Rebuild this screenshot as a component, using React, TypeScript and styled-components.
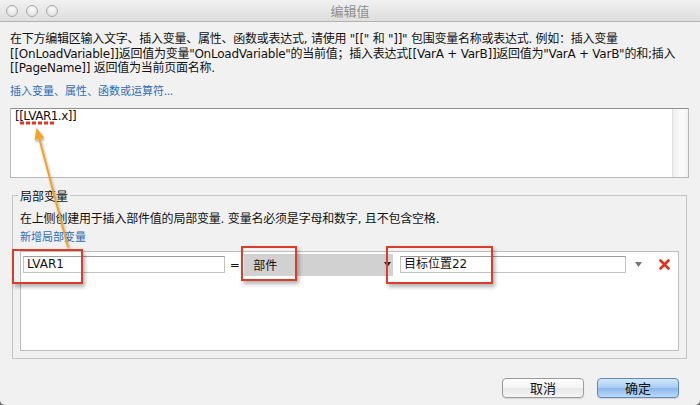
import React from "react";
import styled, { createGlobalStyle } from "styled-components";

const FONT = `"Lucida Grande", "DejaVu Sans", "Noto Sans CJK SC", sans-serif`;
const CJK = `"Noto Sans CJK SC", "DejaVu Sans", sans-serif`;

const GlobalStyle = createGlobalStyle`
  html, body { margin: 0; padding: 0; background: #6f6f6f; }
  body { width: 700px; height: 405px; overflow: hidden; }
  #root { width: 700px; height: 405px; }
`;

const Window = styled.div`
  position: relative;
  width: 700px;
  height: 405px;
  display: flex;
  flex-direction: column;
  background: #f1f1f1;
  border-radius: 0 0 5px 5px;
  overflow: hidden;
  font-family: ${FONT};
  color: #111;
`;

const TitleBar = styled.div`
  flex: none;
  height: 21px;
  display: grid;
  grid-template-columns: 1fr auto 1fr;
  align-items: center;
  background: linear-gradient(#f1f1f1, #dedede);
  border-bottom: 1px solid #b3b3b3;
`;

const Lights = styled.div`
  display: flex;
  gap: 8px;
  padding-left: 6px;
`;

const Light = styled.span`
  width: 12px;
  height: 12px;
  box-sizing: border-box;
  border-radius: 50%;
  border: 1px solid #a8a8a8;
  background: radial-gradient(circle at 50% 35%, #fbfbfb, #dadada);
`;

const Title = styled.div`
  font-family: ${CJK};
  font-size: 13px;
  color: #909090;
`;

const Body = styled.div`
  flex: 1;
  display: flex;
  flex-direction: column;
  padding: 0 11px 0 10px;
`;

const Intro = styled.div`
  margin-top: 10px;
  font-size: 12px;
  line-height: 14.5px;
  letter-spacing: -0.25px;
  white-space: nowrap;
`;

const Link = styled.div<{ $top: number; $lh: number }>`
  align-self: flex-start;
  margin-top: ${(p) => p.$top}px;
  font-family: ${CJK};
  font-size: 11px;
  line-height: ${(p) => p.$lh}px;
  color: #2f6db5;
`;

const Editor = styled.div`
  margin-top: 11px;
  height: 70px;
  box-sizing: border-box;
  display: flex;
  background: #fff;
  border: 1px solid #b8b8b8;
  border-top-color: #8f8f8f;
`;

const EditorText = styled.div`
  flex: 1;
  padding: 0 4px;
  font-size: 12px;
  line-height: 14px;
  letter-spacing: -0.5px;
`;

const Scrollbar = styled.div`
  width: 15px;
  border-left: 1px solid #e2e2e2;
  background: linear-gradient(to right, #efefef, #fcfcfc 60%, #f1f1f1);
`;

const Group = styled.fieldset`
  margin: 11px 2px 0;
  padding: 8px 7px 7px 7px;
  border: 1px solid #c4c4c4;
  min-width: 0;
`;

const Legend = styled.legend`
  padding: 0 2px;
  margin-left: -2px;
  font-family: ${CJK};
  font-size: 12px;
  line-height: 14px;
`;

const GroupText = styled.div`
  font-size: 12px;
  line-height: 16px;
  letter-spacing: -0.2px;
  white-space: nowrap;
`;

const VarList = styled.div`
  margin-top: 7px;
  height: 100px;
  box-sizing: border-box;
  background: #fff;
  border: 1px solid #bcbcbc;
  padding: 2px 0 0 1px;
`;

const VarRow = styled.div`
  display: flex;
  align-items: center;
  height: 22px;
`;

const TextField = styled.div<{ $w: number; $ml: number }>`
  width: ${(p) => p.$w}px;
  margin-left: ${(p) => p.$ml}px;
  height: 17px;
  box-sizing: border-box;
  border: 1px solid #c2c2c2;
  border-top-color: #9d9d9d;
  padding: 0 3px;
  font-size: 12px;
  line-height: 15px;
  background: #fff;
`;

const Equals = styled.span`
  width: 19px;
  text-align: center;
  font-size: 12px;
`;

const Select = styled.div`
  width: 149px;
  height: 22px;
  box-sizing: border-box;
  display: flex;
  align-items: center;
  justify-content: space-between;
  padding: 0 2px 0 9px;
  background: #d1d1d1;
  font-family: ${CJK};
  font-size: 12px;
`;

const IconCell = styled.span<{ $w: number }>`
  width: ${(p) => p.$w}px;
  display: flex;
  align-items: center;
  justify-content: center;
`;

const Footer = styled.div`
  margin-top: 19px;
  display: flex;
  justify-content: flex-end;
  gap: 13px;
  padding-right: 10px;
`;

const Button = styled.button<{ $primary?: boolean }>`
  width: 82px;
  height: 20px;
  box-sizing: border-box;
  padding: 0;
  border-radius: 4px;
  border: 1px solid ${(p) => (p.$primary ? "#5b89c2" : "#9b9b9b")};
  background: ${(p) =>
    p.$primary
      ? "linear-gradient(#d5e7fb, #a8cbf2 50%, #8bb8ec 52%, #bcdafb)"
      : "linear-gradient(#ffffff, #f3f3f3 50%, #e7e7e7 52%, #f5f5f5)"};
  box-shadow: 0 1px 1px rgba(0, 0, 0, 0.12);
  font-family: ${CJK};
  font-size: 13px;
  line-height: 18px;
  color: #111;
`;

const Overlay = styled.svg`
  position: absolute;
  left: 0;
  top: 0;
  width: 700px;
  height: 405px;
  pointer-events: none;
`;

const Callout = styled.div<{ $x: number; $y: number; $w: number; $h: number }>`
  position: absolute;
  left: ${(p) => p.$x}px;
  top: ${(p) => p.$y}px;
  width: ${(p) => p.$w}px;
  height: ${(p) => p.$h}px;
  box-sizing: border-box;
  border: 2px solid #db3e28;
  box-shadow: 2px 3px 4px rgba(0, 0, 0, 0.3);
  pointer-events: none;
`;

const Caret = ({ color }: { color: string }) => (
  <svg width="7" height="5" viewBox="0 0 7 5">
    <path d="M0 0 L7 0 L3.5 5 Z" fill={color} />
  </svg>
);

export default function App() {
  return (
    <>
      <GlobalStyle />
      <Window>
        <TitleBar>
          <Lights>
            <Light />
            <Light />
            <Light />
          </Lights>
          <Title>编辑值</Title>
          <span />
        </TitleBar>
        <Body>
          <Intro>
            在下方编辑区输入文字、插入变量、属性、函数或表达式, 请使用 "[[" 和 "]]" 包围变量名称或表达式. 例如：插入变量
            <br />
            [[OnLoadVariable]]返回值为变量"OnLoadVariable"的当前值；插入表达式[[VarA + VarB]]返回值为"VarA + VarB"的和;插入
            <br />
            [[PageName]] 返回值为当前页面名称.
          </Intro>
          <Link $top={7} $lh={14}>插入变量、属性、函数或运算符...</Link>
          <Editor>
            <EditorText>[[LVAR1.x]]</EditorText>
            <Scrollbar />
          </Editor>
          <Group>
            <Legend>局部变量</Legend>
            <GroupText>在上侧创建用于插入部件值的局部变量. 变量名必须是字母和数字, 且不包含空格.</GroupText>
            <Link $top={1} $lh={16}>新增局部变量</Link>
            <VarList>
              <VarRow>
                <TextField $w={203} $ml={1}>LVAR1</TextField>
                <Equals>=</Equals>
                <Select>
                  <span>部件</span>
                  <Caret color="#222" />
                </Select>
                <TextField $w={227} $ml={7}>目标位置22</TextField>
                <IconCell $w={24}>
                  <Caret color="#777" />
                </IconCell>
                <IconCell $w={28}>
                  <svg width="11" height="11" viewBox="0 0 11 11">
                    <path d="M1.5 1.5 L9.5 9.5 M9.5 1.5 L1.5 9.5" stroke="#e0301f" strokeWidth="2.6" strokeLinecap="round" />
                  </svg>
                </IconCell>
              </VarRow>
            </VarList>
          </Group>
          <Footer>
            <Button>取消</Button>
            <Button $primary>确定</Button>
          </Footer>
        </Body>

        <Overlay viewBox="0 0 700 405">
          <defs>
            <filter id="sh" x="-50%" y="-50%" width="200%" height="200%">
              <feDropShadow dx="1" dy="2" stdDeviation="1.2" floodColor="#000" floodOpacity="0.35" />
            </filter>
          </defs>
          <line x1="20" y1="123" x2="56" y2="123" stroke="#e2341f" strokeWidth="3" strokeDasharray="4 2" />
          <g filter="url(#sh)">
            <line x1="68" y1="247" x2="39.3" y2="138.6" stroke="#f4a128" strokeWidth="2" />
            <path d="M36.5 128 L44.1 137.4 L34.5 139.9 Z" fill="#f4a128" />
          </g>
        </Overlay>
        <Callout $x={12} $y={249} $w={71} $h={35} />
        <Callout $x={241} $y={246} $w={56} $h={35} />
        <Callout $x={386} $y={246} $w={107} $h={38} />
      </Window>
    </>
  );
}
